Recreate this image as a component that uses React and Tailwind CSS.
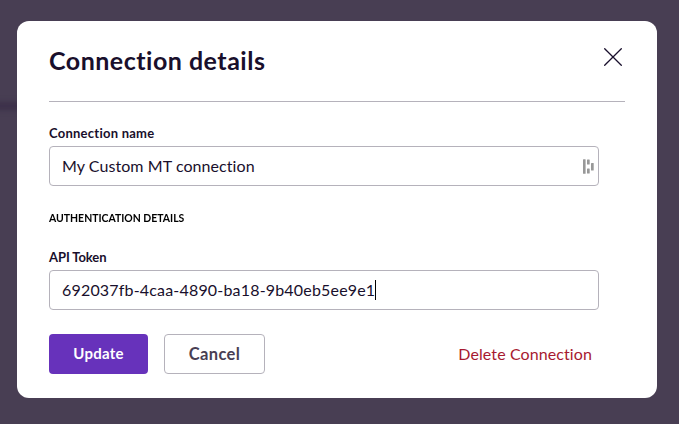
import React from "react";

function CloseIcon() {
  return (
    <svg width="18" height="18" viewBox="0 0 18 18" fill="none" stroke="#190f2c" strokeWidth="1.3" strokeLinecap="round">
      <path d="M0.7 0.7 17.3 17.3M17.3 0.7 0.7 17.3" />
    </svg>
  );
}

function VaultIcon() {
  return (
    <svg width="11" height="15" viewBox="0 0 11 15" fill="#989898">
      <rect x="0" y="0.3" width="2.6" height="14.4" rx="0.5" />
      <rect x="4" y="0.5" width="2.7" height="5" rx="0.5" />
      <rect x="4" y="9.5" width="2.7" height="5" rx="0.5" />
      <rect x="8" y="4" width="2.7" height="7.5" rx="0.5" />
    </svg>
  );
}

function Field({ label, labelClass, children }) {
  return (
    <div>
      <div className="h-5 text-[13px] leading-5 font-bold text-[#190f2c] whitespace-nowrap">
        <span className={labelClass}>{label}</span>
      </div>
      <div className="mt-[3px] flex h-10 w-[550px] items-center rounded border border-[#b5b2bb] pl-3 pr-[4px] text-[16px] text-[#190f2c] whitespace-nowrap">
        {children}
      </div>
    </div>
  );
}

export default function App() {
  return (
    <div className="relative h-[424px] w-[679px] overflow-hidden bg-[#483e53] pl-[17px] pt-[21px] font-['Lato',sans-serif]">
      <div className="absolute -left-3 top-[103px] h-[6px] w-10 bg-[#372b46] blur-[3px]" />
      <div className="relative h-[377px] w-[640px] rounded-xl bg-white px-8">
        <header className="flex h-[81px] w-[576px] items-start justify-between border-b border-[#b5b2bb]">
          <h1 className="mt-[23px] text-[25px] leading-8 font-bold tracking-[0.5px] text-[#190f2c]">Connection details</h1>
          <button className="mt-[27px] mr-[3px]" aria-label="Close">
            <CloseIcon />
          </button>
        </header>
        <main className="pt-[21px]">
          <Field label="Connection name" labelClass="tracking-[0.25px]">
            <span className="tracking-[0.07px]">My Custom MT connection</span>
            <span className="ml-auto"><VaultIcon /></span>
          </Field>
          <h2 className="mt-[21px] h-5 w-[200px] origin-left scale-x-[0.87] pt-px text-[12px] leading-5 font-bold text-black">AUTHENTICATION DETAILS</h2>
          <div className="mt-5">
            <Field label="API Token" labelClass="tracking-[-0.1px]">
              <span className="tracking-[0.18px]">692037fb-4caa-4890-ba18-9b40eb5ee9e1</span>
              <span className="h-5 w-px bg-black" />
            </Field>
          </div>
        </main>
        <footer className="mt-6 flex w-[550px] items-center">
          <button className="h-10 w-[99px] rounded bg-[#6732bb] pb-0.5 text-[15px] font-bold tracking-[0.25px] text-white">Update</button>
          <button className="ml-4 h-10 w-[101px] rounded border border-[#b5b2bb] text-[16.5px] font-bold tracking-[0.35px] text-[#483e53]">Cancel</button>
          <button className="ml-auto mr-[7px] text-[16px] tracking-[0.1px] whitespace-nowrap text-[#a71930]">Delete Connection</button>
        </footer>
      </div>
    </div>
  );
}
